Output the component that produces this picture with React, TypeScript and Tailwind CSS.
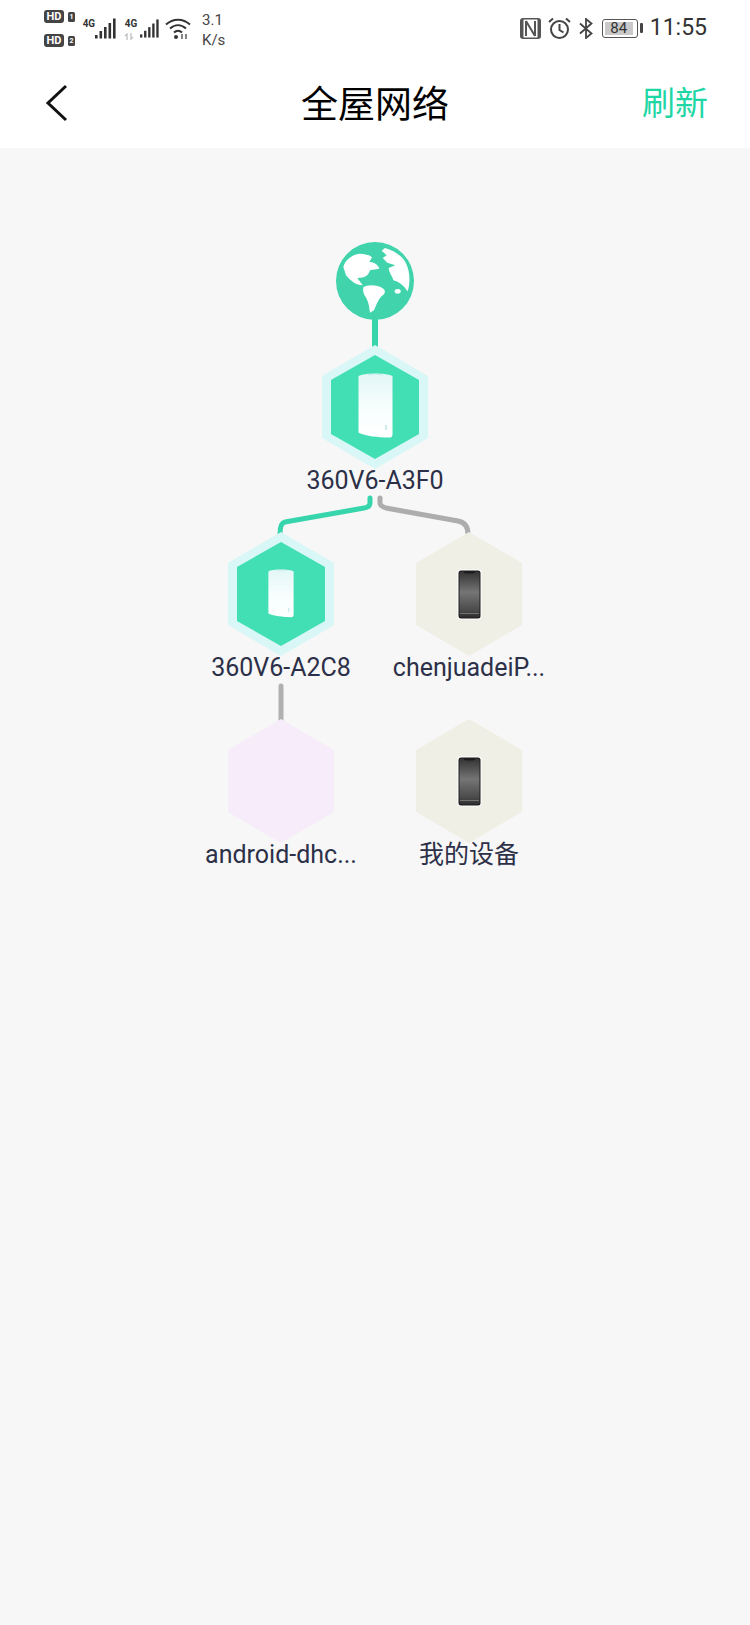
import React from "react";

const Router = ({ small }: { small?: boolean }) => (
  <svg
    viewBox="0 0 35 66"
    className={small ? "w-[26px] h-[50px] mt-[-3px]" : "w-[35px] h-[66px] mt-[-4px]"}
  >
    <defs>
      <linearGradient id={small ? "rs" : "rl"} x1="0" y1="0" x2="0" y2="1">
        <stop offset="0" stopColor="#e2f7f6" />
        <stop offset="0.5" stopColor="#f6fdfd" />
        <stop offset="1" stopColor="#ffffff" />
      </linearGradient>
    </defs>
    <path
      d="M0.5 4 C6 0.5 29 0.5 34.5 4 L34.5 62 C34.5 65 33 65.5 31 65.5 C20 65.5 8 64 1 61 C0.5 60.5 0.5 60 0.5 59 Z"
      fill={`url(#${small ? "rs" : "rl"})`}
    />
    <path d="M10 3 C14 2 21 2 25 3" stroke="#bfe9e8" strokeWidth="0.8" fill="none" />
    <rect x="27.5" y="53" width="1" height="5" fill="#9fdcdc" />
  </svg>
);

const Phone = () => (
  <svg viewBox="0 0 25 51" className="w-[25px] h-[51px]">
    <defs>
      <linearGradient id="ph" x1="0" y1="0" x2="0" y2="1">
        <stop offset="0" stopColor="#333333" />
        <stop offset="0.45" stopColor="#757575" />
        <stop offset="0.85" stopColor="#4a4a4a" />
        <stop offset="1" stopColor="#2c2c2c" />
      </linearGradient>
    </defs>
    <rect x="0.5" y="0.5" width="24" height="50" rx="3" fill="#ffffff" />
    <rect x="1.5" y="1.5" width="22" height="48" rx="2.5" fill="#1c1c1c" />
    <path
      d="M2.5 4 Q2.5 2.5 4 2.5 L6.5 2.5 Q7 4.5 9 4.5 L16 4.5 Q18 4.5 18.5 2.5 L21 2.5 Q22.5 2.5 22.5 4 L22.5 47 Q22.5 48.5 21 48.5 L4 48.5 Q2.5 48.5 2.5 47 Z"
      fill="url(#ph)"
    />
    <rect x="3" y="44" width="19" height="0.7" fill="#8a8a8a" />
  </svg>
);

const Hex = ({
  fill,
  inner,
  children,
}: {
  fill: string;
  inner?: string;
  children?: React.ReactNode;
}) => (
  <div className="relative w-[106px] h-[124px] flex items-center justify-center">
    <svg viewBox="0 0 106 124" className="absolute inset-0 w-[106px] h-[124px]">
      <polygon points="53,0 106,31 106,93 53,124 0,93 0,31" fill={fill} />
      {inner && (
        <polygon points="53,10 97,35 97,89 53,114 9,89 9,35" fill={inner} />
      )}
    </svg>
    <div className="relative flex">{children}</div>
  </div>
);

const Node = ({
  pos,
  label,
  fill,
  inner,
  children,
}: {
  pos: string;
  label: string;
  fill: string;
  inner?: string;
  children?: React.ReactNode;
}) => (
  <div className={`absolute ${pos} w-[106px] flex flex-col items-center`}>
    <Hex fill={fill} inner={inner}>
      {children}
    </Hex>
    <div className="mt-[-3px] h-[30px] leading-[30px] text-[25px] whitespace-nowrap text-[#2c3048]">
      {label}
    </div>
  </div>
);

const Bars = ({ w = 21 }: { w?: number }) => (
  <svg viewBox="0 0 21 21" className="h-[21px]" style={{ width: w }}>
    <rect x="0" y="17" width="2.6" height="3.5" fill="#333" />
    <rect x="4.5" y="13" width="2.6" height="7.5" fill="#333" />
    <rect x="9" y="9" width="2.6" height="11.5" fill="#333" />
    <rect x="13.5" y="5" width="2.6" height="15.5" fill="#333" />
    <rect x="18" y="0.5" width="2.6" height="20" fill="#333" />
  </svg>
);

const Sim = ({ n }: { n: string }) => (
  <div className="flex items-center gap-[4px] h-[14px]">
    <div className="w-[20px] h-[13px] rounded-[3px] bg-[#444] text-white text-[11px] leading-[13px] font-bold text-center">
      HD
    </div>
    <div className="w-[7px] h-[10px] rounded-[1.5px] bg-[#444] text-white text-[7px] leading-[10px] font-bold text-center">
      {n}
    </div>
  </div>
);

const Globe = () => (
  <svg viewBox="198 50 234 234" className="w-[78px] h-[78px]">
    <circle cx="315" cy="167" r="117" fill="#41d4ac" />
    <path
      d="M220 125 C225 105 245 88 270 85 C285 85 300 90 306 96 L298 110 C310 110 325 118 328 130 L300 135 C295 150 288 158 262 158 L278 180 C258 180 240 165 228 150 Z"
      fill="#ffffff"
    />
    <path
      d="M280 186 C290 178 320 176 340 190 C348 196 345 206 335 212 C325 222 318 240 312 255 L300 262 C298 245 295 225 285 212 C280 205 278 195 280 186 Z"
      fill="#ffffff"
    />
    <path
      d="M335 76 L345 68 C372 76 396 92 406 110 C420 135 422 170 413 198 C405 188 396 172 370 165 C366 150 358 145 356 128 L376 120 L352 112 L338 98 L350 90 Z"
      fill="#ffffff"
    />
    <ellipse cx="383" cy="198" rx="9" ry="7" fill="#ffffff" />
  </svg>
);

export default function App() {
  return (
    <div className="w-[750px] h-[1625px] flex flex-col bg-[#f7f7f7] font-['Roboto','Noto_Sans_CJK_SC',sans-serif]">
      <div className="h-[148px] bg-white flex flex-col">
        {/* status bar */}
        <div className="h-[56px] pl-[44px] pr-[43px] flex items-center justify-between text-[#333]">
          <div className="flex items-center">
            <div className="flex flex-col gap-[10px] mt-[1px]">
              <Sim n="1" />
              <Sim n="2" />
            </div>
            <div className="ml-[7px] flex items-start">
              <span className="mt-[-1px] w-[13px] text-[11px] leading-[14px] font-bold scale-x-90">4G</span>
              <div><Bars /></div>
            </div>
            <div className="ml-[8px] flex items-start relative">
              <span className="mt-[-1px] w-[16px] text-[11px] leading-[14px] font-bold scale-x-90">4G</span>
              <svg viewBox="0 0 10 7" className="absolute left-[0px] top-[15px] w-[10px] h-[7px]" fill="none" stroke="#c4c4c4" strokeWidth="1.4">
                <path d="M3 7 V1 L1 3 M7 0 V6 L9 4" />
              </svg>
              <div><Bars w={19} /></div>
            </div>
            <svg viewBox="0 0 26 23" className="ml-[6px] w-[26px] h-[23px]" fill="none" stroke="#333">
              <path d="M1 7.5 C8 1 18 1 25 7.5" strokeWidth="2" />
              <path d="M5 11.5 C10 7 16 7 21 11.5" strokeWidth="2" />
              <path d="M9 15.5 C11.5 13 14.5 13 17 15.5" strokeWidth="2" />
              <circle cx="11" cy="20" r="2" fill="#333" stroke="none" />
              <path d="M17 22 V17 M21 22 V17" strokeWidth="1.2" />
            </svg>
            <div className="ml-[11px] mt-[3px] flex flex-col text-[15px] leading-[20px] text-[#444]">
              <span>3.1</span>
              <span>K/s</span>
            </div>
          </div>
          <div className="flex items-center">
            <svg viewBox="0 0 21 21" className="w-[21px] h-[21px]">
              <rect x="0" y="0" width="21" height="21" rx="3" fill="#555" />
              <rect x="3.5" y="1.5" width="14" height="18" fill="#fff" />
              <path d="M6 3 V18 M15 3 V18 M6 3 L15 18" stroke="#555" strokeWidth="2" fill="none" />
            </svg>
            <svg viewBox="0 0 23 23" className="ml-[7px] w-[23px] h-[23px]" fill="none" stroke="#444" strokeWidth="2">
              <circle cx="11.5" cy="12.5" r="8.5" />
              <path d="M11.5 7 V13 L15.5 15.5" />
              <path d="M1 5 L5 1.5 M22 5 L18 1.5" />
            </svg>
            <svg viewBox="0 0 14 21" className="ml-[8px] w-[14px] h-[21px]" fill="none" stroke="#444" strokeWidth="1.8">
              <path d="M1 5.5 L12.5 15.5 L7 20 V1 L12.5 5.5 L1 15.5" />
            </svg>
            <div className="ml-[9px] flex items-center">
              <div className="w-[36px] h-[19px] rounded-[3px] border border-[#555] p-[2px] flex">
                <div className="w-[28px] bg-[#c9c9c9] text-[15px] leading-[13px] text-center text-[#333]">84</div>
              </div>
              <div className="ml-[2px] w-[3px] h-[10px] bg-[#444] rounded-[1px]" />
            </div>
            <span className="ml-[7px] text-[23px] leading-[28px] text-[#333]">11:55</span>
          </div>
        </div>
        {/* nav */}
        <div className="relative flex-1 flex items-center justify-center">
          <svg viewBox="0 0 24 38" className="absolute left-[45px] top-[28px] w-[24px] h-[38px]" fill="none" stroke="#111" strokeWidth="3">
            <path d="M21 2 L3 19 L21 36" />
          </svg>
          <span className="mt-[-1px] text-[37px] leading-[44px] text-black font-['Noto_Sans_CJK_SC',sans-serif] font-normal">全屋网络</span>
          <span className="absolute right-[42px] top-[23px] text-[33px] leading-[44px] text-[#1fd6a5] font-['Noto_Sans_CJK_SC',sans-serif] font-normal">刷新</span>
        </div>
      </div>
      {/* topology */}
      <div className="relative flex-1">
        <svg viewBox="0 148 750 720" className="absolute left-0 top-0 w-[750px] h-[720px]" fill="none" strokeWidth="5" strokeLinecap="round">
          <path d="M375 320 V350" stroke="#36d5ab" strokeWidth="6" />
          <path d="M370 498 V503 Q370 507 364 508 L285 522 Q280 523 280 534" stroke="#36d5ab" />
          <path d="M380 498 V503 Q380 506 386 508 L458 521 Q468 523 468 534" stroke="#adadad" />
          <path d="M281 686 V722" stroke="#b0b0b0" />
        </svg>
        <div className="absolute left-[336px] top-[94px]"><Globe /></div>
        <Node pos="left-[322px] top-[197px]" label="360V6-A3F0" fill="#d8f7f6" inner="#41dfb3"><Router /></Node>
        <Node pos="left-[228px] top-[384px]" label="360V6-A2C8" fill="#d8f7f6" inner="#41dfb3"><Router small /></Node>
        <Node pos="left-[416px] top-[384px]" label="chenjuadeiP..." fill="#f0efe6"><Phone /></Node>
        <Node pos="left-[228px] top-[571px]" label="android-dhc..." fill="#f7ecf9" />
        <Node pos="left-[416px] top-[571px]" label="我的设备" fill="#f0efe6"><Phone /></Node>
      </div>
    </div>
  );
}
